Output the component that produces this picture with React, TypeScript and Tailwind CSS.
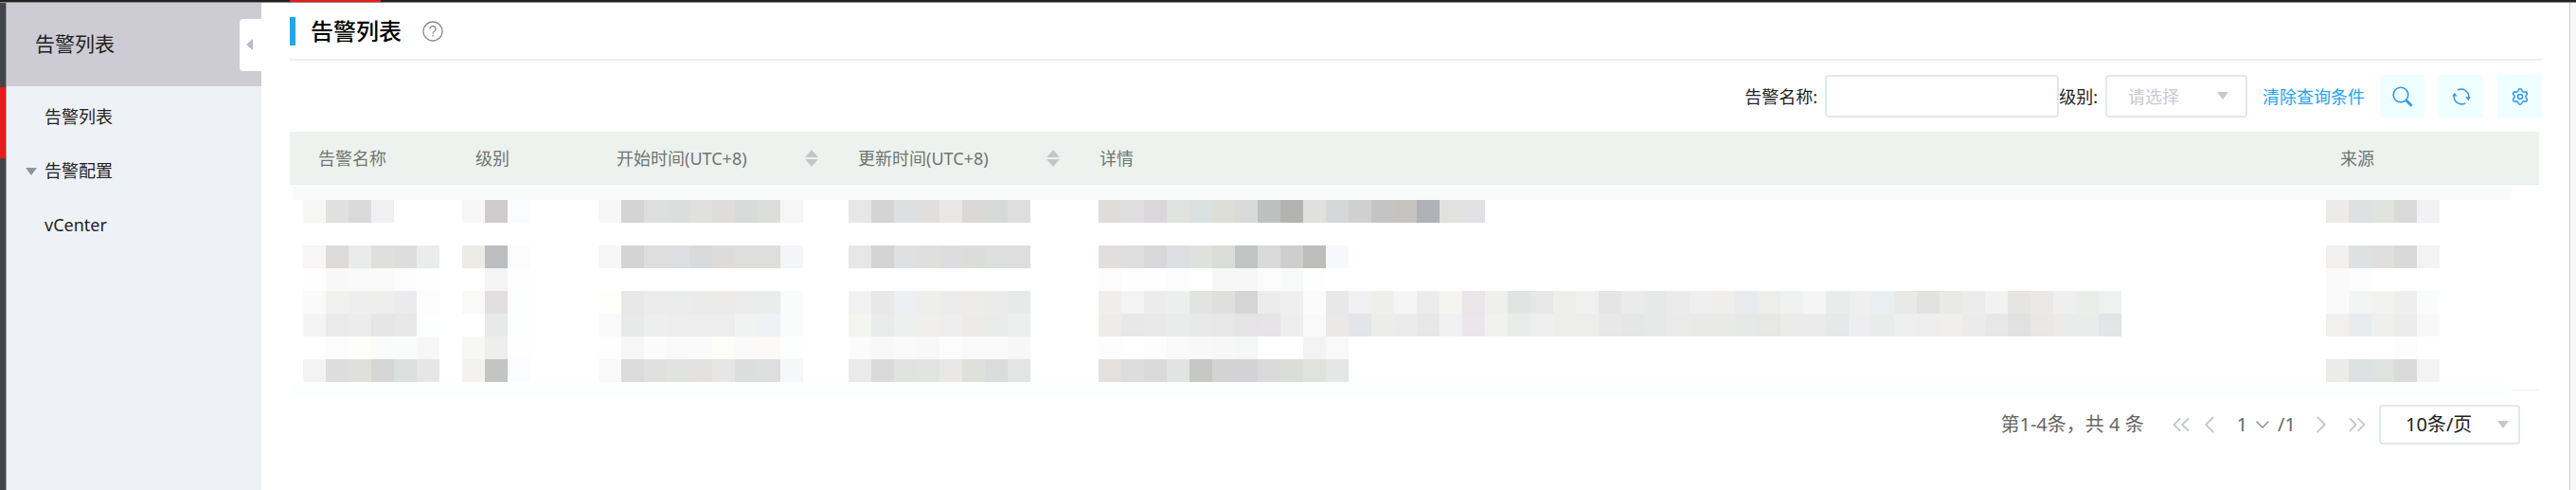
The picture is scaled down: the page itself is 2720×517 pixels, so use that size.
import { ChevronDown, ChevronLeft, ChevronRight, ChevronsLeft, ChevronsRight, Settings } from "lucide-react";

interface Column {
  title: string;
  width: string;
  // left padding of the masked content
  inset: string;
  sortable?: boolean;
}

const columns: Column[] = [
  { title: "告警名称", width: "w-[166px]", inset: "pl-[14px]" },
  { title: "级别", width: "w-[149px]", inset: "pl-[16px]" },
  { title: "开始时间(UTC+8)", width: "w-[255px]", inset: "pl-[11px]", sortable: true },
  { title: "更新时间(UTC+8)", width: "w-[255px]", inset: "pl-[20px]", sortable: true },
  { title: "详情", width: "w-auto", inset: "pl-[29px]" },
  { title: "来源", width: "w-[240px]", inset: "pl-[15px]" },
];

// masked values: row > column > lines of tile colours
const rows: string[][][] = [
  [
    ["f6f6f4 e0e0e0 dadada f0f0f3"],
    ["f7f7f7 cdcbcc fbfcff"],
    ["f7f7f7 d4d4d4 dedede dcdedd e0e0de dfdddc d8dbd9 dddddb f6f6f6"],
    ["e7e7e7 d4d4d4 dedfe1 e0dfdd e8e7e5 dbd9d8 d7d9d8 dedede"],
    ["e0dcd9 dedede d9d7da e0e2e0 dadfdf deded9 dadada bdc0be b3b3b1 e0e0de d6d7d9 d0d0d0 c4c4c4 c5c2c0 b0b1b6 e1e1df e1e1e4"],
    ["ecebe9 dde1e2 e1e3de dadada f2f2f4"],
  ],
  [
    ["f7f5f6 dcdbd9 e8ebe9 dfdfdd dddddd eaedeb", "fefefe f8f8f8 f9f9f9 f9f9f9 fcfcfc fefefe"],
    ["ecebe6 bcbdbf fcfcfc", "ffffff f5f5f5 fefefe"],
    ["f7f7f7 d4d4d4 dedede dddee1 d9dadc dddcda dededc dededc f4f5f8"],
    ["e7e7e7 d4d4d4 dfe0e2 e0dfdd dddde0 dcdcda dcdfdd dedede"],
    [
      "e2dedd dedede d9d7da dddee1 dfe1df dadcd8 c1c4c2 dadada cecece bdbdbb f7f8fc",
      "fcfcfc fefefe fefefe fcfcfc ffffff f7f7f7 f7f7f7 fcfcfc f8faf9 fefefe",
    ],
    ["f1f0ee dde1e2 e0dfdd d9d9d9 f3f3f3", "fafafa fdfdfd"],
  ],
  [
    ["fafafa f1f1ef eeeeee eeeeec ebebee fdfdfd", "f4f4f4 eaeaea ececec e6e6e6 e8e8e8 fdfffe"],
    ["f9f9f7 e2dfe0 fdfffe", "ffffff e9e9e9 fdfffe"],
    ["fefefa e8e8e8 ececec ebedec ebebeb edebea ececec ebedec fafcfb", "fafafa e8eae9 eeeeee ededed ededed ededed f1f3f2 eff1f5 fafcfb"],
    ["f2f2f2 e8e8e8 edeff2 eeeeec ececec edecea ebebeb e7eae8", "f4f4f1 e9ebea eef0ef f0efed eeeeee edebea e9ebea eceeed"],
    [
      "efeeec f3f3f3 ececec edefee e2e4e2 dfdfdd d5d5d5 ececec efefef fbfbfb e8e8e8 f0f0f3 eeeeea f5f5f5 ececec f4f5f1 eae5e9 efefed e1e4e2 e7e7e7 ededea f0f0f0 e5e5e5 ebebeb e7e9e8 ebebeb efefef efeeec e8ebed ededeb f0f2f1 f5f5f5 e9eceb efefef e9eef0 e9e9e7 e1e1df e9e9e7 ececec f2f2f2 e6e5e3 eae9e7 efefef ebede9 eff1f0",
      "edecea e8e8e8 e9e9e9 eaeceb e9e9e9 e7e7e7 e4e4e4 e6e4e7 eeeeee f9f9f9 ebe9e7 e4e5e8 ececea ebebeb e7e7e7 f1f1f1 ebe6ea f1f1ef e9eceb efefef ededea ededea e8e8e8 e6e6e6 e7e9e8 eaeaea e9e9e7 e9e9e7 e7e9e8 e7e7e5 ebebeb ebebeb e6e9e7 eeeef1 e9eceb efefef eeeeee f0efed ebebeb e7e7e7 e1e1e1 e9e8e6 ebebeb e9ecea e3e4e6",
    ],
    ["fafafa f3f5f4 f2f2f0 eeeeee fafcfb", "f1f0ee e9ecee efefed ececec f8f8f8"],
  ],
  [
    ["ffffff fcfcfc fdfdfa fbfbfb fafcfb f7f7f7", "f3f3f3 dddddd dfdfdc d6d6d6 dbe0de e6e6e6"],
    ["f7f7f5 eeeeee fefefe", "f3f2f0 c4c4c4 fbfcff"],
    ["fefefe f6f6f6 fbfbfb f9f9f9 fafafa fcfcf9 fafafa fbfaf8 fdfffe", "f9f9f9 dbdbdb e0e0e0 e1e3e1 e4e2e1 e6e6e6 dcdedd dedede f6f7f9"],
    ["fbfbfb f8f8f8 f9f9f9 f8f8f8 fcfcfc f9f9f9 fafafa f7f7f7", "eaeaea dadada e1e3e1 e2e4e3 eae8e6 dfdfdc dbdddc e3e5e4"],
    [
      "fcfcfc ffffff fdfdfd f9f9f9 f8f8f8 f7f7f7 f5f7f6 ffffff ffffff f3f3f3 f9f9f9",
      "e4e0dd dddddd dadada e2e4e3 c7c7c5 d3d3d3 d3d3d5 dadada dbddd9 e0e2de e5e7e6",
    ],
    ["ffffff ffffff ffffff fcfcfc", "ecebe9 dde1e2 e0e2df dadada f3f3f3"],
  ],
];

const Mask: React.FC<{ lines: string[] }> = ({ lines }) => (
  <>
    {lines.map((line, i) => (
      <div key={i} className="flex h-6">
        {line.split(" ").map((color, j) => (
          <span key={j} className="size-6 shrink-0" style={{ backgroundColor: `#${color}` }} />
        ))}
      </div>
    ))}
  </>
);

const SortIcon = () => (
  <svg viewBox="0 0 14 18" className="h-[18px] w-[14px] fill-[#c3c7cc]">
    <path d="M7 0l7 8H0zM7 18l7-8H0z" />
  </svg>
);

const Caret: React.FC<{ className: string }> = ({ className }) => (
  <svg viewBox="0 0 12 8" className={`pointer-events-none h-2 w-3 ${className}`}>
    <path d="M0 0h12L6 8z" />
  </svg>
);

const Sidebar = () => (
  <aside className="flex w-[269px] shrink-0 flex-col bg-[#eef1f6]">
    <header className="flex h-[88px] items-center justify-between bg-[#cdccd5] pl-[30px] text-[21px]">
      <h2>告警列表</h2>
      <button type="button" aria-label="收起" className="flex h-[55px] w-[23px] items-center rounded-l-sm bg-white pl-[7px]">
        <svg viewBox="0 0 7 12" className="h-3 w-[7px] fill-[#b3bcc8]">
          <path d="M7 0v12L0 6z" />
        </svg>
      </button>
    </header>
    <nav className="flex flex-col pt-1 text-lg leading-[57px]">
      <a href="#list" className="pl-10">告警列表</a>
      <a href="#config" className="flex items-center gap-2 pl-5">
        <Caret className="fill-[#8f959f]" />
        告警配置
      </a>
      <a href="#vcenter" className="pl-10">vCenter</a>
    </nav>
  </aside>
);

const toolButton = "flex h-[45px] w-[47px] items-center justify-center bg-[#efffff] text-[#2f97e0]";

const Toolbar = () => (
  <form className="flex items-center justify-end pt-[15px] text-lg">
    <label htmlFor="name" className="mr-2">告警名称:</label>
    <input id="name" type="text" className="h-[45px] w-[247px] rounded-sm border-2 border-[#e3e7ed] px-3 outline-none" />
    <label htmlFor="level" className="mr-2">级别:</label>
    <div className="relative">
      <select
        id="level"
        className="h-[45px] w-[150px] appearance-none rounded-sm border-2 border-[#e3e7ed] bg-white pl-[22px] text-[#c6cad1] outline-none"
      >
        <option>请选择</option>
      </select>
      <Caret className="absolute top-[18px] right-5 fill-[#c3c8d0]" />
    </div>
    <button type="button" className="mx-4 text-[#22a5e9]">清除查询条件</button>
    <div className="flex gap-[15px]">
      <button type="button" aria-label="查询" className={toolButton}>
        <svg viewBox="0 0 22 22" className="size-[22px] fill-none stroke-current">
          <circle cx="9" cy="9" r="7.8" strokeWidth="1.6" />
          <path d="M14.6 14.8l6 6" strokeWidth="2.8" />
        </svg>
      </button>
      <button type="button" aria-label="刷新" className={toolButton}>
        <svg viewBox="0 0 20 18" className="h-[18px] w-5 fill-none stroke-current" strokeWidth="1.5">
          <path d="M5.8 2.2A8 8 0 0 1 17.8 9.6M14.2 15.8A8 8 0 0 1 2.2 8.4" />
          <path d="M14.2 9.3h5.6l-2.4 3.8zM.2 8.6h5.6L2.6 4.9z" className="fill-current stroke-none" />
        </svg>
      </button>
      <button type="button" aria-label="设置" className={toolButton}>
        <Settings size={20} strokeWidth={1.8} />
      </button>
    </div>
  </form>
);

const AlarmTable = () => (
  <table className="mt-[15px] w-full table-fixed border-separate border-spacing-0 text-left">
    <thead>
      <tr className="h-14 bg-[#edf2ee] text-lg text-[#70756f]">
        {columns.map((col) => (
          <th key={col.title} className={`border-b border-[#e6edeb] p-0 pl-[30px] font-normal ${col.width}`}>
            <div className="flex items-center justify-between pr-3">
              {col.title}
              {col.sortable && <SortIcon />}
            </div>
          </th>
        ))}
      </tr>
    </thead>
    <tbody>
      <tr aria-hidden="true">
        <td colSpan={6} className="p-0 pt-[3px] pr-[29px] pl-[3px]">
          <div className="h-[13px] bg-[#f9fbfa]" />
        </td>
      </tr>
      {rows.map((row, i) => (
        <tr key={i} className={i === 0 ? "h-12" : ""}>
          {row.map((lines, j) => (
            <td key={j} className={`p-0 align-top ${columns[j].inset}`}>
              <Mask lines={lines} />
            </td>
          ))}
        </tr>
      ))}
      <tr aria-hidden="true">
        <td colSpan={6} className="p-0">
          <div className="flex h-[17px]">
            <div className="grow bg-[#fdfffe]" />
            <div className="h-[9px] w-[29px] border-b border-[#e6edeb]" />
          </div>
        </td>
      </tr>
    </tbody>
  </table>
);

const Pagination = () => (
  <div className="flex items-center justify-end pt-[7px] pr-[23px] text-xl text-[#666]">
    <span>第1-4条，共 4 条</span>
    <div className="ml-6 flex items-center text-[#c6cad1]">
      <button type="button" aria-label="首页"><ChevronsLeft size={30} strokeWidth={1.5} /></button>
      <button type="button" aria-label="上一页"><ChevronLeft size={30} strokeWidth={1.5} /></button>
    </div>
    <button type="button" aria-label="选择页码" className="ml-[14px] flex items-center gap-1">
      1
      <ChevronDown size={24} strokeWidth={1.5} className="text-[#8b8f95]" />
    </button>
    <span className="ml-1">/1</span>
    <div className="ml-3 flex items-center gap-2 text-[#c6cad1]">
      <button type="button" aria-label="下一页"><ChevronRight size={30} strokeWidth={1.5} /></button>
      <button type="button" aria-label="末页"><ChevronsRight size={30} strokeWidth={1.5} /></button>
    </div>
    <div className="relative ml-2">
      <select
        aria-label="每页条数"
        className="h-[42px] w-[149px] appearance-none rounded-sm border-2 border-[#e3e7ed] bg-white pl-[26px] text-[#222] outline-none"
      >
        <option>10条/页</option>
      </select>
      <Caret className="absolute top-[17px] right-3 fill-[#c3c8d0]" />
    </div>
  </div>
);

const App = () => {
  return (
    <div className="flex min-h-screen flex-col bg-white font-['Noto_Sans','Noto_Sans_CJK_SC',sans-serif] text-[#222]">
      <div className="h-[3px] border-b border-[#8c8c8c] bg-[#222] pl-[306px]">
        <div className="h-[2px] w-24 bg-[#e81c1a]" />
      </div>
      <div className="flex grow">
        <div className="w-[7px] shrink-0 border-r border-[#9a9ca0] bg-[#424549] pt-[89px]">
          <div className="h-[75px] bg-[#e81c1a]" />
        </div>
        <Sidebar />
        <main className="min-w-0 grow pr-[29px] pl-[30px]">
          <header className="flex h-[61px] items-center border-b-2 border-[#eaf0ef]">
            <span className="h-[30px] w-[6px] bg-[#22a5e9]" />
            <h1 className="ml-4 text-2xl font-medium text-black">告警列表</h1>
            <svg viewBox="0 0 22 22" className="ml-[22px] size-[22px] fill-none stroke-[#8b8b8b]" strokeWidth="1.3">
              <circle cx="11" cy="11" r="10" />
              <path d="M8 8.6a3 3 0 1 1 4.4 2.6c-1 .6-1.4 1-1.4 2.2M11 15v1.4" />
            </svg>
          </header>
          <Toolbar />
          <div className="pr-[3px]">
            <AlarmTable />
          </div>
          <Pagination />
        </main>
        <div className="w-[7px] shrink-0 border-l border-[#ccc] bg-[#f7f7f7]" />
      </div>
    </div>
  );
};

export default App;
